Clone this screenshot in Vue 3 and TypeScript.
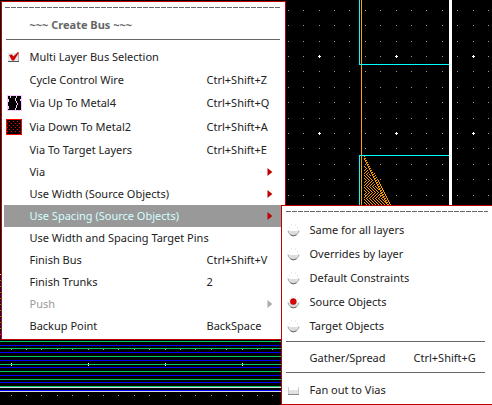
<script setup lang="ts">
interface Item {
  label: string
  keys?: string
  icon?: 'check' | 'metal4' | 'metal2' | 'radio' | 'radioOn'
  sub?: boolean
  state?: 'active' | 'disabled'
  height?: number
}

const items: Item[] = [
  { label: 'Multi Layer Bus Selection', icon: 'check' },
  { label: 'Cycle Control Wire', keys: 'Ctrl+Shift+Z', height: 23 },
  { label: 'Via Up To Metal4', keys: 'Ctrl+Shift+Q', icon: 'metal4', height: 24 },
  { label: 'Via Down To Metal2', keys: 'Ctrl+Shift+A', icon: 'metal2', height: 24 },
  { label: 'Via To Target Layers', keys: 'Ctrl+Shift+E' },
  { label: 'Via', sub: true },
  { label: 'Use Width (Source Objects)', sub: true },
  { label: 'Use Spacing (Source Objects)', sub: true, state: 'active' },
  { label: 'Use Width and Spacing Target Pins' },
  { label: 'Finish Bus', keys: 'Ctrl+Shift+V' },
  { label: 'Finish Trunks', keys: '2' },
  { label: 'Push', sub: true, state: 'disabled' },
  { label: 'Backup Point', keys: 'BackSpace' },
]

const modes: Item[] = [
  { label: 'Same for all layers', icon: 'radio' },
  { label: 'Overrides by layer', icon: 'radio' },
  { label: 'Default Constraints', icon: 'radio' },
  { label: 'Source Objects', icon: 'radioOn' },
  { label: 'Target Objects', icon: 'radio' },
]

// Layout canvas: grid dots every 15.4 units, a cross on each fifth one.
const dots: { x: number; y: number }[] = []
const crosses: { x: number; y: number }[] = []
for (let i = 0; i < 32; i++) {
  for (let j = 0; j < 26; j++) {
    const p = { x: Math.round(10.5 + i * 15.4), y: Math.round(9.8 + j * 15.4) }
    if (i % 5 === 0 && j % 5 === 3) crosses.push(p)
    else dots.push(p)
  }
}

const wires = [
  [341, '#00c864'], [345, '#0000ff'], [348, '#00c864'], [352, '#0000ff'],
  [356, '#00c864'], [360, '#0000ff'], [364, '#00c864'], [367, '#0000ff'],
  [371, '#00c864'], [375, '#0000ff'], [379, '#00c864'], [382, '#0000ff'],
  [386, '#00c864'], [387, '#dcdcdc'], [390, '#0000ff'], [391, '#dcdcdc'],
] as [number, string][]

const edge: { y: number; c: string }[] = []
for (let y = 274, n = 0; y < 340; y += 3, n++) {
  edge.push({ y, c: n === 0 ? '#dcdcdc' : y === 334 ? '#ff00ff' : n % 2 ? '#0000ff' : '#00c864' })
}

// Broken diagonal strands filling the orange wedge.
let hatch = ''
for (let y = 156; y < 205; y++) {
  const right = 364 + (y - 155) * 0.56
  const z = y % 12 < 6 ? y % 6 : 6 - (y % 6)
  for (let x = 364; x <= right; x++) {
    const outer = x > right - 5
    const on = outer ? (x - (y >> 1) + 300) % 3 === 0 : (x + z) % 3 === 0
    if (on || (outer && (x * 5 + y * 3) % 11 === 0)) hatch += `M${x} ${y}h1v1h-1z`
  }
}
</script>

<template>
  <main class="stage">
    <svg class="canvas" width="492" height="405" viewBox="0 0 492 405" shape-rendering="crispEdges">
      <rect width="492" height="405" fill="#000" />
      <rect v-for="(d, i) in dots" :key="'d' + i" :x="d.x" :y="d.y" width="1" height="1" fill="#a0a0a0" />
      <path v-for="(c, i) in crosses" :key="'c' + i" :d="`M${c.x - 1} ${c.y}h3v1h-3zM${c.x} ${c.y - 1}h1v3h-1z`" fill="#fff" />
      <rect v-for="w in wires" :key="w[0]" x="0" :y="w[0]" width="285" height="1" :fill="w[1]" />
      <rect v-for="e in edge" :key="e.y" x="0" :y="e.y" width="1" height="1" :fill="e.c" />
      <path d="M359 0h1v65h-1zM359 155h1v50h-1z" fill="#00ffff" />
      <rect x="361" y="0" width="1" height="206" fill="#ffa010" />
      <path d="M359 64h90v1h-90zM359 155h90v1h-90z" fill="#00ffff" />
      <path :d="hatch" fill="#ff9900" />
      <rect x="449" y="0" width="3" height="206" fill="#fff" />
    </svg>

    <section class="menu">
      <div class="tear" />
      <h1 class="title">~~~ Create Bus ~~~</h1>
      <hr class="rule">
      <ul class="list">
        <li v-for="it in items" :key="it.label" class="item" :class="it.state" :style="{ height: (it.height ?? 22) + 'px' }">
          <span class="icon">
            <svg v-if="it.icon === 'check'" width="16" height="16" viewBox="0 0 16 16">
              <path d="M2 4h10v9H2z" fill="#e8e8e8" />
              <path d="M2 12.5h11" stroke="#555" />
              <path d="M12.5 4v8" stroke="#aaa" />
              <path d="M3 6L6 5.4L7.4 7.6L12 3L13 3.6L8 11.4H6z" fill="#d00000" />
            </svg>
            <svg v-else-if="it.icon === 'metal4'" width="16" height="16" viewBox="0 0 16 16" shape-rendering="crispEdges">
              <path d="M1 0h15v16H1z" fill="#ffc8ff" />
              <path d="M2 1h13v14H2z" fill="#000" />
              <path d="M4 1h1v2h-1zM10 1h1v2h-1zM9 3h1v3h-1zM10 6h1v2h-1zM11 8h1v2h-1zM10 10h1v3h-1zM9 13h1v2h-1zM2 4h1v3h-1zM2 11h1v3h-1zM14 4h1v2h-1z" fill="#ffc8ff" />
            </svg>
            <svg v-else-if="it.icon === 'metal2'" width="16" height="16" viewBox="0 0 16 16" shape-rendering="crispEdges">
              <path d="M0 0h16v16H0z" fill="#ff0000" />
              <path d="M1 1h14v14H1z" fill="#000" />
              <path d="M3 2.5h11M3 6.5h11M3 10.5h11M1 4.5h14M1 8.5h14M1 12.5h14" stroke="#ff0000" stroke-dasharray="1 3" />
            </svg>
          </span>
          <span class="label">{{ it.label }}</span>
          <span class="keys">{{ it.keys }}</span>
          <svg v-if="it.sub" class="arrow" width="6" height="8" viewBox="0 0 6 8">
            <path d="M0.5 0L5.3 4L0.5 8z" />
          </svg>
        </li>
      </ul>
    </section>

    <section class="submenu">
      <div class="tear" />
      <ul class="modes">
        <li v-for="m in modes" :key="m.label" class="item">
          <span class="icon">
            <svg width="13" height="13" viewBox="0 0 13 13">
              <path d="M1 5.5C1 13.4 12 13.4 12 5.5L11 7H2z" fill="#ddd" />
              <path d="M1 6.5C1.5 13.2 11.5 13.2 12 6.5" fill="none" stroke="#aaa" />
              <path d="M3.5 11Q6.5 12.8 9.5 11" fill="none" stroke="#666" />
              <path d="M4 1h1M8 1h1M2 3.5h1M10 3.5h1" stroke="#ddd" />
              <circle v-if="m.icon === 'radioOn'" cx="6.3" cy="5.6" r="3" fill="#e00000" stroke="#901010" stroke-width=".6" />
            </svg>
          </span>
          <span class="label">{{ m.label }}</span>
        </li>
      </ul>
      <hr class="rule">
      <div class="item gather">
        <span class="icon" />
        <span class="label">Gather/Spread</span>
        <span class="keys">Ctrl+Shift+G</span>
      </div>
      <hr class="rule">
      <div class="item fan">
        <span class="icon">
          <svg width="13" height="13" viewBox="0 0 13 13">
            <path d="M1.5 6h10v4h-10z" fill="#e2e2e2" />
            <path d="M1.5 3v7M11.5 3v7" stroke="#ccc" />
            <path d="M1 10.5h11" stroke="#888" />
          </svg>
        </span>
        <span class="label">Fan out to Vias</span>
      </div>
    </section>
  </main>
</template>

<style>
body {
  margin: 0;
  background: #000;
}
</style>

<style scoped>
.stage {
  position: relative;
  width: 492px;
  height: 405px;
  overflow: hidden;
  font: 11px/16px "Noto Sans", "Open Sans", sans-serif;
  color: #222;
}
.canvas {
  display: block;
}
.menu,
.submenu {
  position: absolute;
  box-sizing: border-box;
  background: #fff;
  border: 1px solid #c00000;
}
.menu {
  left: 1px;
  top: 1px;
  width: 285px;
  height: 339px;
  padding: 5px 2px 0;
}
.submenu {
  left: 281px;
  top: 205px;
  width: 214px;
  height: 200px;
  padding: 5px 3px 0;
}
.tear {
  height: 1px;
  margin: 0 3px 0 1px;
  background: repeating-linear-gradient(90deg, #666 0 5px, #fff 5px 6px);
}
.title {
  margin: 9px 0 7px 25.5px;
  font-size: 11px;
  line-height: 15px;
  font-weight: 700;
  color: #666;
}
.rule {
  height: 1px;
  margin: 0 3px 0 2px;
  border: 0;
  background: #666;
}
.list,
.modes {
  margin: 0;
  padding: 0;
  list-style: none;
}
.list {
  padding-top: 6px;
}
.item {
  display: flex;
  align-items: center;
  white-space: nowrap;
}
.icon {
  display: flex;
  flex: none;
  width: 16px;
  margin: 0 7.5px 0 2px;
}
.label {
  flex: none;
  width: 177px;
}
.keys {
  flex: none;
  width: 60.5px;
}
.arrow {
  fill: #c00000;
}
.active {
  background: #999;
  color: #d4ffff;
}
.disabled {
  color: #999;
}
.disabled .arrow {
  fill: #aaa;
}
.modes {
  padding: 6px 0 3px;
}
.submenu .rule {
  margin: 0 6px 0 1px;
}
.submenu .item {
  height: 24px;
}
.submenu .icon {
  width: 13px;
  margin: 0 9.5px 0 2px;
}
.submenu .label {
  width: 104px;
}
.submenu .gather {
  box-sizing: border-box;
  height: 30px;
  padding-top: 2px;
}
.submenu .fan {
  box-sizing: border-box;
  height: 32px;
  padding-top: 2px;
}
</style>
